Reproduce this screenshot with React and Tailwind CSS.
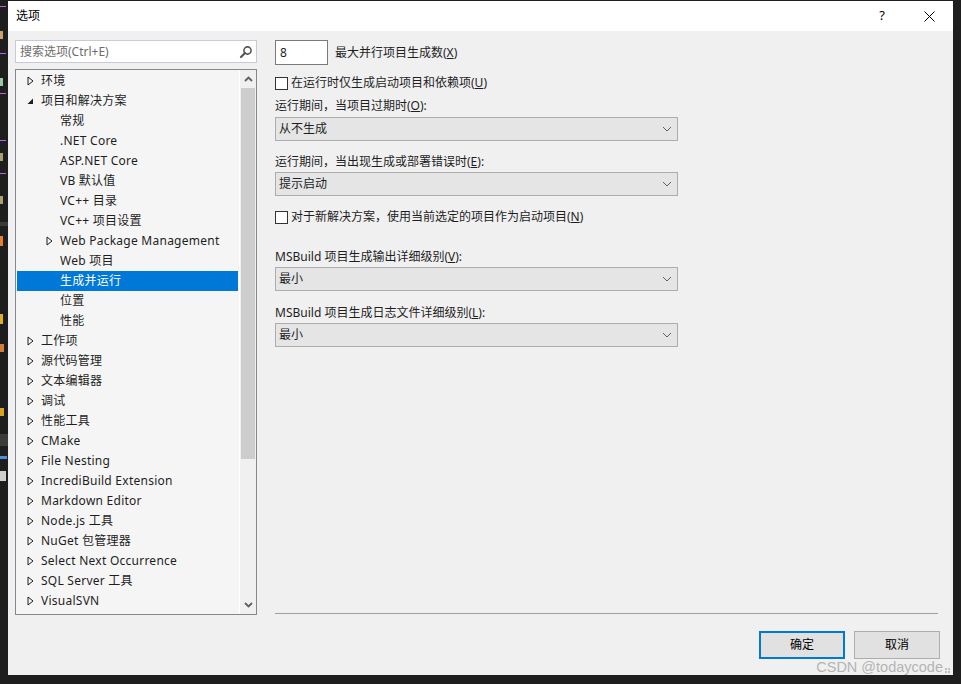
import React from "react";

const FONT = { fontFamily: '"Noto Sans", "Noto Sans CJK SC", sans-serif' };

const treeItems = [
  { label: "环境", level: 0, state: "closed" },
  { label: "项目和解决方案", level: 0, state: "open" },
  { label: "常规", level: 1 },
  { label: ".NET Core", level: 1 },
  { label: "ASP.NET Core", level: 1 },
  { label: "VB 默认值", level: 1 },
  { label: "VC++ 目录", level: 1 },
  { label: "VC++ 项目设置", level: 1 },
  { label: "Web Package Management", level: 1, state: "closed" },
  { label: "Web 项目", level: 1 },
  { label: "生成并运行", level: 1, selected: true },
  { label: "位置", level: 1 },
  { label: "性能", level: 1 },
  { label: "工作项", level: 0, state: "closed" },
  { label: "源代码管理", level: 0, state: "closed" },
  { label: "文本编辑器", level: 0, state: "closed" },
  { label: "调试", level: 0, state: "closed" },
  { label: "性能工具", level: 0, state: "closed" },
  { label: "CMake", level: 0, state: "closed" },
  { label: "File Nesting", level: 0, state: "closed" },
  { label: "IncrediBuild Extension", level: 0, state: "closed" },
  { label: "Markdown Editor", level: 0, state: "closed" },
  { label: "Node.js 工具", level: 0, state: "closed" },
  { label: "NuGet 包管理器", level: 0, state: "closed" },
  { label: "Select Next Occurrence", level: 0, state: "closed" },
  { label: "SQL Server 工具", level: 0, state: "closed" },
  { label: "VisualSVN", level: 0, state: "closed" },
];

// 左边露出来的编辑器代码碎片
const codeBits = [
  { mt: "mt-[6px]", c: "bg-[#b267e6]", w: "w-[6px]", h: "h-[1px]" },
  { mt: "mt-[24px]", c: "bg-[#c9a26d]", w: "w-[3px]", h: "h-[8px]" },
  { mt: "mt-[14px]", c: "bg-[#b267e6]", w: "w-[6px]", h: "h-[1px]" },
  { mt: "mt-[24px]", c: "bg-[#9cc7a6]", w: "w-[3px]", h: "h-[8px]" },
  { mt: "mt-[7px]", c: "bg-[#b267e6]", w: "w-[6px]", h: "h-[1px]" },
  { mt: "mt-[46px]", c: "bg-[#b267e6]", w: "w-[6px]", h: "h-[1px]" },
  { mt: "mt-[12px]", c: "bg-[#a8a070]", w: "w-[3px]", h: "h-[8px]" },
  { mt: "mt-[12px]", c: "bg-[#b267e6]", w: "w-[6px]", h: "h-[1px]" },
  { mt: "mt-[22px]", c: "bg-[#a8a070]", w: "w-[3px]", h: "h-[8px]" },
  { mt: "mt-[18px]", c: "bg-[#3a3a3a]", w: "w-[8px]", h: "h-[4px]" },
  { mt: "mt-[10px]", c: "bg-[#e37f2f]", w: "w-[3px]", h: "h-[10px]" },
  { mt: "mt-[68px]", c: "bg-[#e0b020]", w: "w-[3px]", h: "h-[10px]" },
  { mt: "mt-[20px]", c: "bg-[#d77d3a]", w: "w-[4px]", h: "h-[8px]" },
  { mt: "mt-[56px]", c: "bg-[#d9a520]", w: "w-[4px]", h: "h-[8px]" },
  { mt: "mt-[18px]", c: "bg-[#3c3c3c]", w: "w-[8px]", h: "h-[12px]" },
  { mt: "mt-[10px]", c: "bg-[#4a8fd8]", w: "w-[7px]", h: "h-[3px]" },
  { mt: "mt-[12px]", c: "bg-[#d0d0d0]", w: "w-[6px]", h: "h-[10px]" },
];

function ClosedArrow() {
  return (
    <svg width="7" height="10" viewBox="0 0 7 10">
      <path d="M1 1 L6 5 L1 9 Z" fill="none" stroke="#1e1e1e" strokeWidth="1" />
    </svg>
  );
}

function OpenArrow() {
  return (
    <svg width="7" height="7" viewBox="0 0 7 7">
      <path d="M6 0.5 L6 6 L0.5 6 Z" fill="#1e1e1e" />
    </svg>
  );
}

function Chevron() {
  return (
    <svg width="10" height="6" viewBox="0 0 10 6">
      <path d="M1 1 L5 5 L9 1" fill="none" stroke="#606060" strokeWidth="1" />
    </svg>
  );
}

function TreeRow({ item }) {
  const pad = item.level === 0 ? "pl-[10px]" : "pl-[29px]";
  return (
    <div
      className={`flex h-[20px] mx-[1px] items-center ${pad} ${
        item.selected ? "bg-[#0078d7] text-white" : "text-[#1e1e1e]"
      }`}
    >
      <span className="flex w-[14px] items-center">
        {item.state === "closed" && <ClosedArrow />}
        {item.state === "open" && <OpenArrow />}
      </span>
      <span className="whitespace-nowrap tracking-[0.25px]">{item.label}</span>
    </div>
  );
}

function Checkbox({ children }) {
  return (
    <div className="flex h-[20px] items-center">
      <span className="h-[13px] w-[13px] border border-[#333333] bg-white" />
      <span className="ml-[3px]">{children}</span>
    </div>
  );
}

function Select({ value, className }) {
  return (
    <div
      className={`flex h-[24px] w-[403px] items-center justify-between border border-[#adadad] bg-[#e5e5e5] pl-[3px] pr-[5px] ${className}`}
    >
      <span>{value}</span>
      <Chevron />
    </div>
  );
}

export default function App() {
  return (
    <div
      className="flex h-[684px] w-[961px] overflow-hidden bg-[#1e1e1e] text-[12px] text-[#1e1e1e]"
      style={FONT}
    >
      <div className="flex w-[8px] flex-col">
        {codeBits.map((b, i) => (
          <span key={i} className={`${b.mt} ${b.c} ${b.w} ${b.h} shrink-0`} />
        ))}
      </div>

      <div className="relative mt-[1px] flex h-[674px] w-[945px] flex-col bg-[#f0f0f0]">
        {/* 标题栏 */}
        <div className="flex h-[30px] items-center bg-white pl-[8px] pr-[18px]">
          <span className="text-[12px] text-black">选项</span>
          <span className="ml-auto text-[13px] text-black">?</span>
          <svg className="ml-[39px]" width="11" height="11" viewBox="0 0 11 11">
            <path d="M0.5 0.5 L10.5 10.5 M10.5 0.5 L0.5 10.5" stroke="#000" strokeWidth="1" />
          </svg>
        </div>

        <div className="flex pt-[9px]">
          {/* 左侧：搜索 + 树 */}
          <div className="ml-[7px] flex w-[242px] flex-col">
            <div className="flex h-[23px] items-center border border-[#c8cbd7] bg-white pl-[4px] pr-[3px]">
              <span className="text-[#6d6d6d]">搜索选项(Ctrl+E)</span>
              <svg className="ml-auto" width="14" height="14" viewBox="0 0 14 14">
                <circle cx="8.5" cy="5.5" r="3.6" fill="none" stroke="#555" strokeWidth="1.6" />
                <path d="M6 8 L2 12" stroke="#555" strokeWidth="2.2" strokeLinecap="round" />
              </svg>
            </div>

            <div className="mt-[6px] flex h-[546px] border border-[#828790] bg-[#f5f5f5]">
              <div className="flex-1 overflow-hidden pt-[1px]">
                {treeItems.map((item) => (
                  <TreeRow key={item.label} item={item} />
                ))}
              </div>
              <div className="flex w-[17px] flex-col border-l border-white bg-[#f0f0f0]">
                <div className="flex h-[18px] items-center justify-center">
                  <svg width="9" height="6" viewBox="0 0 9 6">
                    <path d="M1 5 L4.5 1.5 L8 5" fill="none" stroke="#606060" strokeWidth="1.8" />
                  </svg>
                </div>
                <div className="mx-[1px] h-[371px] bg-[#cdcdcd]" />
                <div className="mt-auto flex h-[18px] items-center justify-center">
                  <svg width="9" height="6" viewBox="0 0 9 6">
                    <path d="M1 1 L4.5 4.5 L8 1" fill="none" stroke="#606060" strokeWidth="1.8" />
                  </svg>
                </div>
              </div>
            </div>
          </div>

          {/* 右侧：选项 */}
          <div className="ml-[18px] flex w-[663px] flex-col">
            <div className="flex items-center">
              <div className="flex h-[25px] w-[53px] items-center border border-[#7a7a7a] bg-white pl-[4px]">
                8
              </div>
              <span className="ml-[7px]">
                最大并行项目生成数(<u>X</u>)
              </span>
            </div>

            <div className="mt-[8px]">
              <Checkbox>
                在运行时仅生成启动项目和依赖项(<u>U</u>)
              </Checkbox>
            </div>

            <div className="mt-[3px] flex h-[20px] items-center">
              运行期间，当项目过期时(<u>O</u>):
            </div>
            <Select value="从不生成" className="mt-[1px]" />

            <div className="mt-[11px] flex h-[20px] items-center">
              运行期间，当出现生成或部署错误时(<u>E</u>):
            </div>
            <Select value="提示启动" className="mt-[0px]" />

            <div className="mt-[11px]">
              <Checkbox>
                对于新解决方案，使用当前选定的项目作为启动项目(<u>N</u>)
              </Checkbox>
            </div>

            <div className="mt-[20px] flex h-[20px] items-center">
              MSBuild 项目生成输出详细级别(<u>V</u>):
            </div>
            <Select value="最小" className="mt-[0px]" />

            <div className="mt-[12px] flex h-[20px] items-center">
              MSBuild 项目生成日志文件详细级别(<u>L</u>):
            </div>
            <Select value="最小" className="mt-[0px]" />

            <div className="mb-[1px] mt-auto h-[1px] bg-[#a0a0a0]" />
          </div>
        </div>

        {/* 底部按钮 */}
        <div className="mt-[16px] flex justify-end gap-[9px] pr-[13px]">
          <button className="flex h-[28px] w-[86px] items-center justify-center border-2 border-[#0078d7] bg-[#e1e1e1] text-black">
            确定
          </button>
          <button className="flex h-[28px] w-[86px] items-center justify-center border border-[#adadad] bg-[#e1e1e1] text-black">
            取消
          </button>
        </div>

        <div className="absolute bottom-[0px] right-[3px] flex items-end gap-[2px]">
          <span
            className="text-[14.5px] leading-[16px] text-[#b4b4b4]"
            style={{ fontFamily: '"Liberation Sans", Arial, sans-serif' }}
          >
            CSDN @todaycode
          </span>
          <span className="mb-[2px] grid grid-cols-2 gap-[1px]">
            <span className="h-[2px] w-[2px] bg-[#c0c0c0]" />
            <span className="h-[2px] w-[2px] bg-[#c0c0c0]" />
            <span className="h-[2px] w-[2px] bg-[#c0c0c0]" />
            <span className="h-[2px] w-[2px] bg-[#c0c0c0]" />
          </span>
        </div>
      </div>
    </div>
  );
}
